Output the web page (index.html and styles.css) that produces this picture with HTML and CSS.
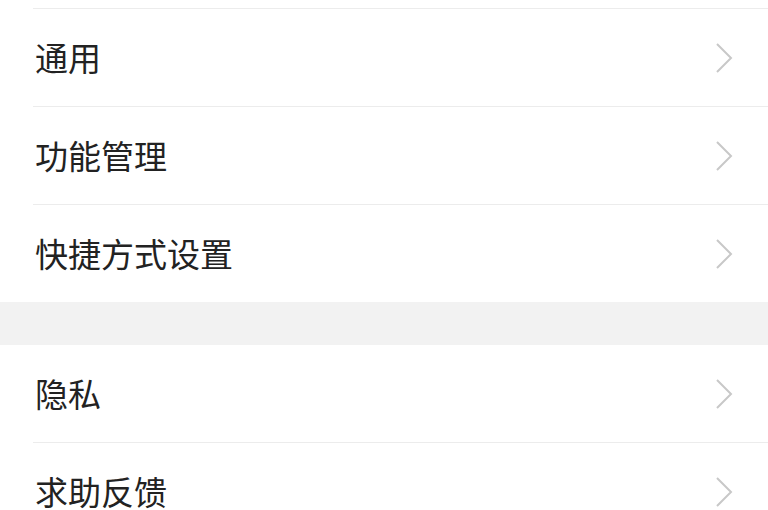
FILE: index.html
```html
<!DOCTYPE html>
<html lang="zh-CN">
<head>
    <meta charset="UTF-8">
    <meta name="viewport" content="width=device-width, initial-scale=1.0">
    <title>设置</title>
    <link rel="stylesheet" href="styles.css">
</head>
<body>

<div class="group">
    <div class="item item-tail"></div>
    <div class="item">
        <span class="label">通用</span>
        <svg class="chevron" viewBox="0 0 20 32"><path d="M3 2 L17 16 L3 30"/></svg>
    </div>
    <div class="item">
        <span class="label">功能管理</span>
        <svg class="chevron" viewBox="0 0 20 32"><path d="M3 2 L17 16 L3 30"/></svg>
    </div>
    <div class="item">
        <span class="label">快捷方式设置</span>
        <svg class="chevron" viewBox="0 0 20 32"><path d="M3 2 L17 16 L3 30"/></svg>
    </div>
</div>

<div class="gap"></div>

<div class="group">
    <div class="item">
        <span class="label">隐私</span>
        <svg class="chevron" viewBox="0 0 20 32"><path d="M3 2 L17 16 L3 30"/></svg>
    </div>
    <div class="item">
        <span class="label">求助反馈</span>
        <svg class="chevron" viewBox="0 0 20 32"><path d="M3 2 L17 16 L3 30"/></svg>
    </div>
</div>

</body>
</html>
```
FILE: styles.css
```css
body {
    margin: 0;
    background-color: #ffffff;
    font-family: "Noto Sans CJK SC", "Noto Sans", sans-serif;
    color: #222222;
}
.group {
    background-color: #ffffff;
}
.item {
    display: flex;
    align-items: center;
    justify-content: space-between;
    height: 97px;
    margin-left: 33px;
    padding: 0 34px 0 2px;
    border-bottom: 1px solid #ececec;
}
.item:last-child {
    border-bottom: none;
}
.item-tail {
    height: 8px;
}
.label {
    font-size: 33px;
    line-height: 1;
}
.chevron {
    width: 20px;
    height: 32px;
    fill: none;
    stroke: #c8c8c8;
    stroke-width: 2;
}
.gap {
    height: 43px;
    background-color: #f2f2f2;
}
```
